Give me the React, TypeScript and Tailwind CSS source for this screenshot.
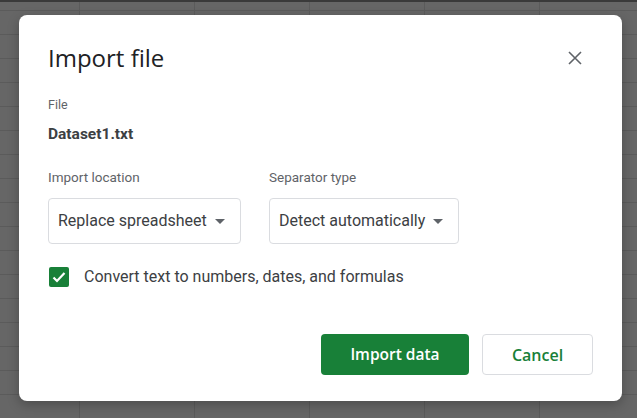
import * as React from 'react'

function Caret() {
  return (
    <svg width="10" height="5" viewBox="0 0 10 5" className="shrink-0">
      <path d="M0 0 L10 0 L5 5 Z" fill="#5f6368" />
    </svg>
  )
}

function SelectBox({ label, value, width }: { label: string; value: string; width: string }) {
  return (
    <div className="flex flex-col">
      <div className="text-[13.5px] leading-4 text-[#5f6368]">{label}</div>
      <button
        className={`mt-[13px] flex h-[46px] ${width} items-center gap-[8px] rounded-[4px] border border-[#dadce0] bg-white pl-[9px] text-left text-[16px] text-[#3c4043]`}
      >
        <span>{value}</span>
        <Caret />
      </button>
    </div>
  )
}

export default function App() {
  return (
    <div className="relative h-[418px] w-[637px] overflow-hidden bg-[#666666] [background-image:linear-gradient(to_right,#5b5b5b_1px,transparent_1px),linear-gradient(to_bottom,#5b5b5b_1px,transparent_1px)] [background-position:79px_10px] [background-size:115px_24px] font-['Roboto','Liberation_Sans',sans-serif]">
      <div className="h-[2px] bg-[#3a3a3a]" />

      <div
        role="dialog"
        className="absolute left-[19px] top-[15px] flex h-[386px] w-[603px] flex-col rounded-[8px] bg-white px-[29px] pb-[26px] pt-[29px] shadow-[0_4px_12px_rgba(0,0,0,0.25)]"
      >
        <div className="flex items-center justify-between">
          <h1 className="font-['Open_Sans','Liberation_Sans',sans-serif] text-[24px] leading-7 text-[#202124]">
            Import file
          </h1>
          <button className="mr-[6px] flex h-6 w-6 items-center justify-center text-[#5f6368]">
            <svg width="14" height="14" viewBox="0 0 14 14">
              <path d="M1 1 L13 13 M13 1 L1 13" stroke="currentColor" strokeWidth="1.6" />
            </svg>
          </button>
        </div>

        <div className="mt-[25px] text-[12.5px] leading-4 text-[#5f6368]">File</div>
        <div className="mt-[11px] text-[15.5px] font-bold leading-5 text-[#3c4043]">Dataset1.txt</div>

        <div className="mt-[25px] flex gap-[28px]">
          <SelectBox label="Import location" value="Replace spreadsheet" width="w-[193px]" />
          <SelectBox label="Separator type" value="Detect automatically" width="w-[190px]" />
        </div>

        <label className="mt-[21px] flex items-center gap-[15px]">
          <span className="ml-px flex h-[20px] w-[20px] items-center justify-center rounded-[2px] bg-[#188038]">
            <svg width="14" height="12" viewBox="0 0 14 12">
              <path d="M1.5 6.5 L5 10 L12.5 2" fill="none" stroke="white" strokeWidth="2.2" />
            </svg>
          </span>
          <span className="text-[16px] text-[#3c4043]">Convert text to numbers, dates, and formulas</span>
        </label>

        <div className="mt-auto flex justify-end gap-[13px] font-['Open_Sans','Liberation_Sans',sans-serif]">
          <button className="h-[41px] w-[148px] rounded-[4px] bg-[#188038] text-[15.5px] font-semibold text-white">
            Import data
          </button>
          <button className="h-[41px] w-[111px] rounded-[4px] border border-[#dadce0] bg-white text-[16px] font-semibold text-[#188038]">
            Cancel
          </button>
        </div>
      </div>
    </div>
  )
}
